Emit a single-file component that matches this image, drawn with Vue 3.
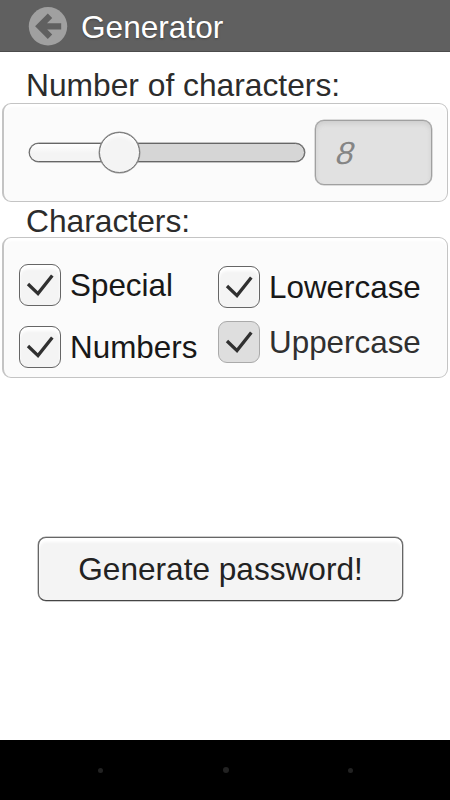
<script setup>
import { ref } from 'vue'

const length = ref(8)
const columns = ref([
  [
    { label: 'Special', checked: true, locked: false },
    { label: 'Numbers', checked: true, locked: false },
  ],
  [
    { label: 'Lowercase', checked: true, locked: false },
    { label: 'Uppercase', checked: true, locked: true },
  ],
])

function toggle(option) {
  if (!option.locked) option.checked = !option.checked
}
</script>

<template>
  <div class="screen">
    <header class="bar">
      <svg class="back" width="40" height="40" viewBox="0 0 40 40">
        <circle cx="20" cy="20.3" r="19.2" fill="#a0a0a0" />
        <path d="M33.2 20.3H12M22 9.8L11.5 20.3L22 30.8" fill="none" stroke="#606060" stroke-width="6.2" stroke-linejoin="miter" />
      </svg>
      <h1 class="title">Generator</h1>
    </header>

    <main class="content">
      <h2 class="heading">Number of characters:</h2>
      <section class="panel length-panel">
        <div class="slider">
          <div class="filled"></div>
          <div class="thumb"></div>
        </div>
        <div class="count"><span class="digit">{{ length }}</span></div>
      </section>

      <h2 class="heading second">Characters:</h2>
      <section class="panel options">
        <div v-for="(column, i) in columns" :key="i" class="column">
          <div
            v-for="option in column"
            :key="option.label"
            class="option"
            :class="{ locked: option.locked }"
            @click="toggle(option)"
          >
            <span class="box">
              <svg v-if="option.checked" width="28" height="24" viewBox="0 0 28 24">
                <path d="M2 11L12 20.6L26.3 2.5" fill="none" stroke="#303030" stroke-width="3.3" />
              </svg>
            </span>
            <span class="label">{{ option.label }}</span>
          </div>
        </div>
      </section>

      <button class="generate">Generate password!</button>
    </main>

    <footer class="nav">
      <i class="dot"></i>
      <i class="dot home"></i>
      <i class="dot"></i>
    </footer>
  </div>
</template>

<style>
body {
  margin: 0;
  background: #fff;
}
</style>

<style scoped>
.screen {
  display: flex;
  flex-direction: column;
  width: 450px;
  height: 800px;
  overflow: hidden;
  background: #fff;
  color: #2c2c2c;
  font-family: "Liberation Sans", Arial, sans-serif;
  font-size: 31.7px;
  line-height: 36px;
}
.screen * {
  box-sizing: border-box;
}
.bar {
  display: flex;
  align-items: center;
  height: 52px;
  flex: none;
  padding-left: 28px;
  border-bottom: 1px solid #4c4c4c;
  background: #606060;
}
.title {
  margin: 2px 0 0 13px;
  color: #fff;
  font-size: 31.6px;
  font-weight: 400;
  text-shadow: 0 1px 2px #404040;
}
.content {
  display: flex;
  flex-direction: column;
  height: 688px;
  flex: none;
}
.heading {
  height: 36px;
  margin: 15px 0 0 26px;
  font-size: 31.75px;
  font-weight: 400;
}
.heading.second {
  height: 35px;
  margin-top: 0;
  line-height: 38px;
}
.panel {
  display: flex;
  width: 446px;
  flex: none;
  margin-left: 2px;
  border: 1px solid #c4c4c4;
  border-width: 1px 1px 1px 2px;
  border-radius: 9px;
  background: #fbfbfb;
  box-shadow: inset 0 3px 3px #fff;
}
.length-panel {
  align-items: center;
  height: 99px;
  padding: 0 0 1px 25px;
}
.slider {
  display: flex;
  align-items: center;
  width: 276px;
  height: 19px;
  border: 1px solid #666;
  box-shadow: 0 0 0 0.5px #888;
  border-radius: 10px;
  background: #d6d6d6;
}
.filled {
  width: 80px;
  height: 17px;
  border-radius: 9px 0 0 9px;
  background: linear-gradient(#fff, #f4f4f4 55%);
}
.thumb {
  width: 41px;
  height: 41px;
  flex: none;
  margin-left: -11px;
  border: 1px solid #777;
  border-radius: 50%;
  background: #f4f4f4;
  box-shadow: inset 0 5px 4px -2px #fff, 0 0 0 0.5px #999;
}
.count {
  width: 117px;
  height: 65px;
  margin-left: 10px;
  padding: 14px 0 0 21px;
  border: 1px solid #a0a0a0;
  border-radius: 9px;
  background: #e1e1e1;
  box-shadow: inset 0 3px 4px #cfcfcf, 0 0 0 0.5px #bbb;
  color: #858585;
  font-size: 32px;
}
.digit {
  display: inline-block;
  transform: skewX(-15deg);
}
.options {
  height: 141px;
  padding-left: 15px;
}
.column {
  display: flex;
  flex-direction: column;
  width: 199px;
  gap: 20px;
  padding-top: 26px;
}
.column + .column {
  gap: 13px;
  padding-top: 28px;
}
.option {
  display: flex;
  align-items: center;
  height: 42px;
  gap: 9px;
  color: #181818;
  font-size: 31.4px;
}
.label {
  padding-top: 1px;
}
.box {
  display: grid;
  place-items: center;
  width: 42px;
  height: 42px;
  flex: none;
  border: 1px solid #666;
  border-radius: 9px;
  background: #f4f4f4;
  box-shadow: inset 0 4px 3px #fff;
}
.locked {
  color: #303030;
}
.locked .box {
  border-color: #aaa;
  background: #dedede;
  box-shadow: none;
}
.generate {
  width: 365px;
  height: 64px;
  margin: 159px 0 0 38px;
  padding: 0;
  border: 1px solid #666;
  border-bottom-color: #444;
  border-radius: 8px;
  background: #f4f4f4;
  box-shadow: inset 0 4px 3px #fff, 0 0 0 0.5px #999;
  color: #222;
  font: inherit;
  font-size: 31.6px;
}
.nav {
  display: flex;
  align-items: center;
  justify-content: space-between;
  height: 60px;
  padding: 0 97px 0 98px;
  background: #000;
}
.dot {
  width: 5px;
  height: 5px;
  border-radius: 50%;
  background: #222;
}
.home {
  width: 6px;
  height: 6px;
}
</style>
